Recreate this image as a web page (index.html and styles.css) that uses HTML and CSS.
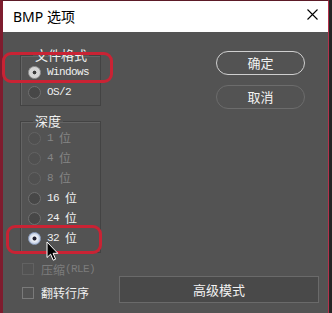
FILE: index.html
```html
<!DOCTYPE html>
<html lang="zh-CN">
<head>
  <meta charset="UTF-8">
  <title>BMP 选项</title>
  <link rel="stylesheet" href="styles.css">
</head>
<body>

  <div class="dialog">
    <!-- Title bar -->
    <div class="titlebar">
      <span class="title">BMP 选项</span>
      <svg class="close" width="11" height="11" viewBox="0 0 11 11">
        <path d="M0.5 0.5 L10.5 10.5 M10.5 0.5 L0.5 10.5" stroke="#000" stroke-width="1.1" fill="none"/>
      </svg>
    </div>

    <div class="content">
      <div class="main">
        <div class="left">
          <fieldset class="group">
            <legend>文件格式</legend>
            <div class="row"><span class="radio on"></span><span class="lat">Windows</span></div>
            <div class="row"><span class="radio"></span><span class="lat">OS/2</span></div>
          </fieldset>

          <fieldset class="group depth">
            <legend>深度</legend>
            <div class="row disabled"><span class="radio"></span><span class="lat">1 </span>位</div>
            <div class="row disabled"><span class="radio"></span><span class="lat">4 </span>位</div>
            <div class="row disabled"><span class="radio"></span><span class="lat">8 </span>位</div>
            <div class="row"><span class="radio"></span><span class="lat">16 </span>位</div>
            <div class="row"><span class="radio"></span><span class="lat">24 </span>位</div>
            <div class="row"><span class="radio on blue"></span><span class="lat">32 </span>位</div>
          </fieldset>
        </div>

        <div class="right">
          <button class="pill primary">确定</button>
          <button class="pill">取消</button>
        </div>
      </div>

      <div class="bottom">
        <div class="check disabled"><span class="box"></span>压缩<span class="lat">(RLE)</span></div>
        <div class="check second"><span class="box"></span>翻转行序</div>
        <button class="advanced">高级模式</button>
      </div>
    </div>

    <!-- annotations drawn over the dialog -->
    <div class="mark mark-format"></div>
    <div class="mark mark-depth"></div>
    <svg class="cursor" width="13" height="21" viewBox="0 0 13 21">
      <path d="M1 1 L1 16.5 L4.6 13.2 L7.2 19.2 L9.6 18.2 L7.1 12.3 L11.8 12.3 Z" fill="#000" stroke="#fff" stroke-width="1"/>
    </svg>
  </div>

</body>
</html>
```

FILE: styles.css
```css
body {
  margin: 0;
  width: 332px;
  height: 313px;
  overflow: hidden;
  background-color: #252525;
  font-family: "Noto Sans CJK SC", "Noto Sans", sans-serif;
}

.dialog {
  position: relative;
  box-sizing: border-box;
  width: 329px;
  height: 313px;
  background-color: #535353;
  border-top: 1px solid #5c1a27;
  border-left: 3px solid #7e1c2e;
  border-right: 1px solid #b3324c;
}

.titlebar {
  height: 31px;
  background-color: #fff;
  display: flex;
  align-items: center;
  justify-content: space-between;
  padding: 0 10px 0 10px;
}

.title {
  font-family: "Noto Sans", "Noto Sans CJK SC", sans-serif;
  font-size: 14px;
  color: #000;
  margin-top: -2px;
}

.close {
  margin-top: -4px;
}

.content {
  padding: 16px 10px 0 17px;
  color: #f0f0f0;
  font-size: 12px;
}

.main {
  display: flex;
}

.left {
  width: 81px;
}

.group {
  box-sizing: border-box;
  width: 81px;
  margin: 0;
  padding: 0 0 3px 7px;
  border: 1px solid #434343;
  box-shadow: inset 1px 1px 0 #646464;
}

.group legend {
  font-size: 13px;
  line-height: 14px;
  height: 14px;
  padding: 0 2px;
  margin-left: 5px;
  color: #f0f0f0;
}

.depth {
  margin-top: 8px;
  padding-bottom: 4px;
}

.row {
  display: flex;
  align-items: center;
  height: 20px;
  line-height: 20px;
}

.row.disabled {
  color: #858585;
}

.lat {
  font-family: "Liberation Mono", monospace;
  font-size: 11px;
  letter-spacing: -0.6px;
  white-space: pre;
}

.radio {
  box-sizing: border-box;
  width: 13px;
  height: 13px;
  border-radius: 50%;
  border: 1px solid #6f6f6f;
  background-color: #474747;
  margin-right: 6px;
  flex-shrink: 0;
  position: relative;
}

.row.disabled .radio {
  border-color: #636363;
  background-color: #505050;
}

.radio.on {
  border-color: #9a9a9a;
  background: radial-gradient(circle, #3a3a3a 0 1.6px, #d4d4d4 2.2px);
}

.radio.on.blue {
  border-color: #8ea0c0;
  background: radial-gradient(circle, #202030 0 1.6px, #f4f6fb 2.4px, #b9c6df 6px);
}

.right {
  margin-left: auto;
  margin-right: 13px;
  display: flex;
  flex-direction: column;
  gap: 10px;
  padding-top: 3px;
}

.pill {
  box-sizing: border-box;
  width: 89px;
  height: 24px;
  border-radius: 12px;
  border: 1.5px solid #cfcfcf;
  background: transparent;
  color: #f2f2f2;
  font-family: "Noto Sans CJK SC", sans-serif;
  font-size: 13px;
  padding: 0;
  line-height: 20px;
}

.pill:not(.primary) {
  border-color: #6c6c6c;
}

.bottom {
  display: grid;
  grid-template-columns: 99px 200px;
  grid-template-rows: 20px 21px;
  row-gap: 3px;
  margin-top: 6px;
}

.check {
  display: flex;
  align-items: center;
  padding-left: 2px;
  grid-column: 1;
}

.check.second {
  grid-row: 2;
}

.check.disabled {
  color: #7c7c7c;
}

.box {
  box-sizing: border-box;
  width: 12px;
  height: 12px;
  border: 1px solid #7a7a7a;
  margin-right: 7px;
}

.check.disabled .box {
  border-color: #626262;
}

.advanced {
  grid-column: 2;
  grid-row: 1 / 3;
  align-self: end;
  box-sizing: border-box;
  width: 200px;
  height: 27px;
  border: 1px solid #6a6a6a;
  background-color: #494949;
  color: #f2f2f2;
  font-family: "Noto Sans CJK SC", sans-serif;
  font-size: 13px;
  padding: 0;
}

.mark {
  position: absolute;
  box-sizing: border-box;
  border: 3px solid #c92334;
  border-radius: 9px;
}

.mark-format {
  left: -1px;
  top: 51px;
  width: 111px;
  height: 31px;
}

.mark-depth {
  left: 3px;
  top: 224px;
  width: 96px;
  height: 29px;
}

.cursor {
  position: absolute;
  left: 43px;
  top: 240px;
}
```
